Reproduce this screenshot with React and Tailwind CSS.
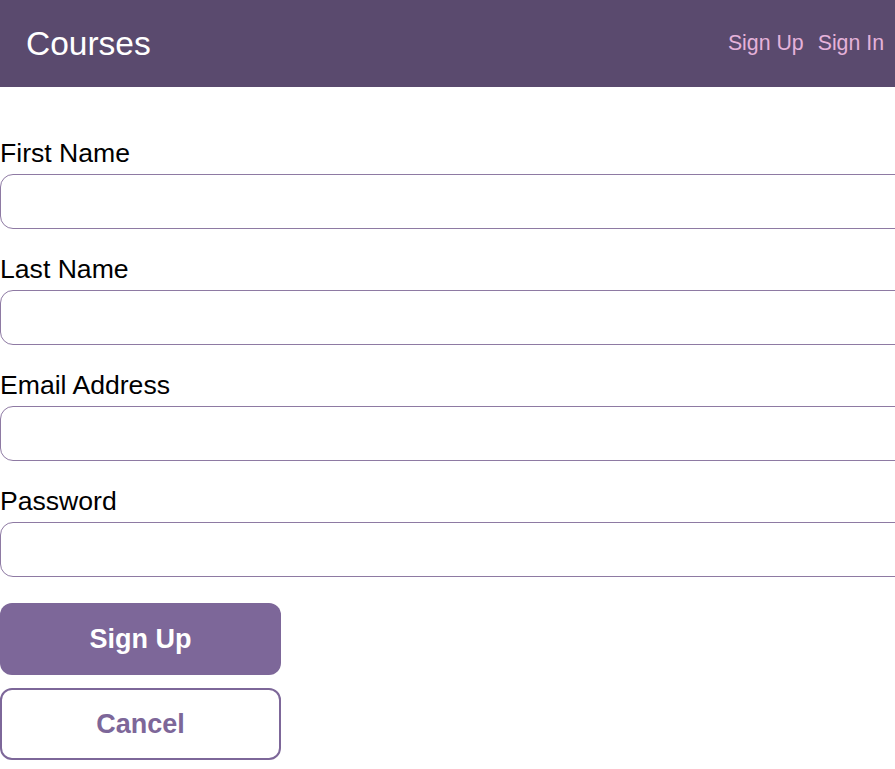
import React from "react";

const fields = ["First Name", "Last Name", "Email Address", "Password"];

export default function App() {
  return (
    <div className="w-[895px] h-[769px] overflow-hidden bg-white font-['Liberation_Sans',Arial,sans-serif]">
      <header className="h-[87px] bg-[#5a4a6e] flex items-center justify-between pl-[26px] pr-[11px]">
        <h1 className="text-[33.5px] text-white leading-none">Courses</h1>
        <nav className="flex gap-[14px] text-[21.3px] text-[#e5b2da] pt-[1px]">
          <a>Sign Up</a>
          <a>Sign In</a>
        </nav>
      </header>
      <form className="pt-[51px] flex flex-col">
        {fields.map((f) => (
          <div key={f} className="flex flex-col mb-[25px]">
            <label className="text-[26.6px] leading-[30px] text-black mb-[6px]">{f}</label>
            <input
              type={f === "Password" ? "password" : "text"}
              className="w-[920px] h-[55px] border border-[#8e7aa3] rounded-[13px] outline-none"
            />
          </div>
        ))}
        <button
          type="button"
          className="mt-[1px] w-[281px] h-[72px] rounded-[12px] bg-[#7d6799] text-white font-bold text-[27px]"
        >
          Sign Up
        </button>
        <button
          type="button"
          className="mt-[13px] w-[281px] h-[72px] rounded-[12px] border-2 border-[#7d6799] bg-white text-[#7d6799] font-bold text-[27px]"
        >
          Cancel
        </button>
      </form>
    </div>
  );
}
